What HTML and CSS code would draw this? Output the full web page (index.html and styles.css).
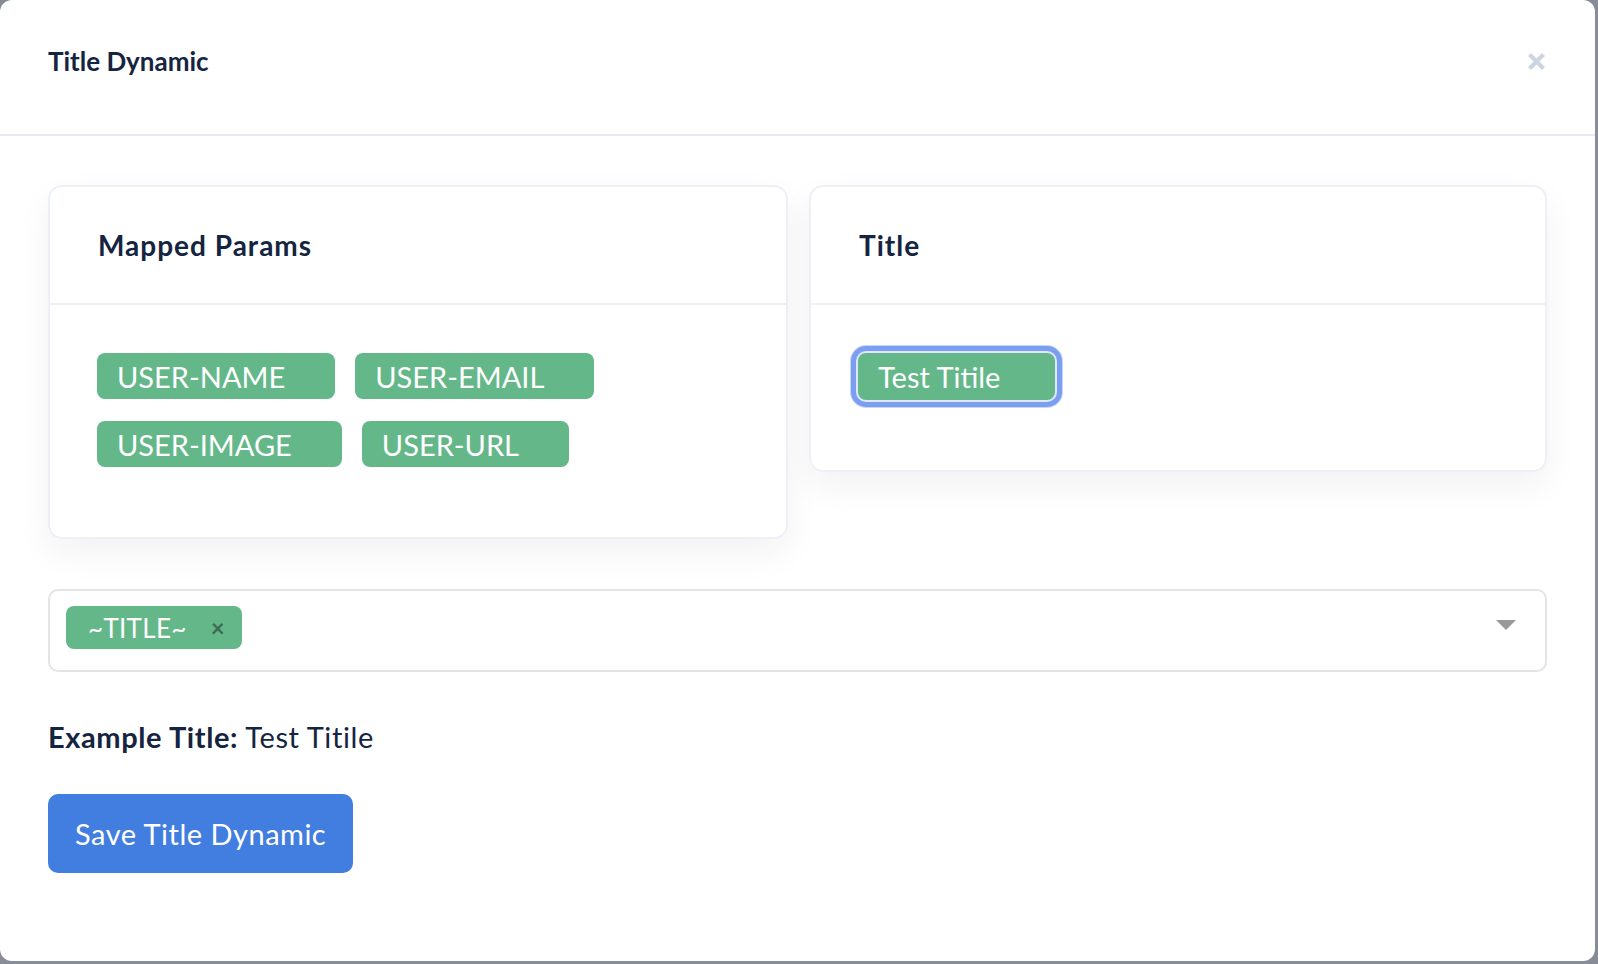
FILE: index.html
```html
<!DOCTYPE html>
<html lang="en">
    <head>
        <meta charset="UTF-8">
        <meta name="viewport" content="width=device-width, initial-scale=1.0">
        <title>Title Dynamic</title>
        <link rel="stylesheet" href="styles.css">
    </head>
    <body>
        <div class="modal">
            <div class="modal-head">
                <div class="modal-title">Title Dynamic</div>
                <button class="close" type="button">
                    <svg width="19" height="19" viewBox="0 0 19 19">
                        <path d="M2.5 2.5 L16.5 16.5 M16.5 2.5 L2.5 16.5" stroke="#ccd3e1" stroke-width="4.2" stroke-linecap="butt"/>
                    </svg>
                </button>
            </div>

            <div class="modal-body">
                <div class="cards">
                    <div class="card">
                        <div class="card-head">Mapped Params</div>
                        <div class="card-body">
                            <span class="tag">USER-NAME</span>
                            <span class="tag">USER-EMAIL</span>
                            <span class="tag">USER-IMAGE</span>
                            <span class="tag">USER-URL</span>
                        </div>
                    </div>
                    <div class="card">
                        <div class="card-head">Title</div>
                        <div class="card-body">
                            <span class="tag tag-focus">Test Titile</span>
                        </div>
                    </div>
                </div>

                <!-- 选择框 -->
                <div class="select">
                    <span class="chip">~TITLE~<span class="chip-x">×</span></span>
                    <span class="caret"></span>
                </div>

                <p class="example"><b>Example Title:</b> Test Titile</p>

                <button class="save" type="button">Save Title Dynamic</button>
            </div>
        </div>
    </body>
</html>
```

FILE: styles.css
```css
* {
    margin: 0;
    padding: 0;
    box-sizing: border-box;
}

body {
    background-color: #878c97;
    font-family: Lato, "Liberation Sans", sans-serif;
    color: #15243f;
    overflow: hidden;
}

.modal {
    width: 1595px;
    height: 961px;
    background-color: #fff;
    border-radius: 12px;
}

.modal-head {
    display: flex;
    align-items: center;
    justify-content: space-between;
    height: 136px;
    padding: 0 49px 0 48px;
    border-bottom: 2px solid #e6e9f2;
}

.modal-title {
    font-size: 26px;
    font-weight: 700;
    margin-top: -13px;
}

.close {
    border: none;
    background: none;
    display: flex;
    margin-top: -11px;
}

.modal-body {
    padding: 49px 48px;
}

.cards {
    display: grid;
    grid-template-columns: 740px 738px;
    gap: 21px;
    align-items: start;
}

.card {
    border: 2px solid #edf1f7;
    border-radius: 14px;
    box-shadow: 0 14px 34px rgba(30, 40, 70, 0.06);
}

.card-head {
    height: 118px;
    display: flex;
    align-items: center;
    padding: 0 48px;
    font-size: 28px;
    font-weight: 700;
    letter-spacing: 1px;
    border-bottom: 2px solid #edf1f7;
}

.card-body {
    padding: 48px 47px 26px;
    display: flex;
    flex-wrap: wrap;
}

.tag {
    display: inline-flex;
    align-items: center;
    height: 46px;
    padding: 0 50px 0 20px;
    margin: 0 20px 22px 0;
    background-color: #64b789;
    color: #fff;
    border-radius: 8px;
    font-size: 29px;
}

.tag-focus {
    height: 47px;
    padding-right: 55px;
    box-shadow: 0 0 0 2px #dfe7fb, 0 0 0 7px #7b9ef0, 0 0 0 8px #c8d6f8;
}

.card-body:last-child {
    padding-bottom: 48px;
}

.select {
    position: relative;
    display: flex;
    align-items: flex-start;
    height: 83px;
    margin-top: 50px;
    padding: 15px 16px 0;
    border: 2px solid #e4e4e4;
    border-radius: 10px;
}

.chip {
    display: inline-flex;
    align-items: center;
    height: 43px;
    padding: 0 17px 0 22px;
    background-color: #64b789;
    color: #fff;
    border-radius: 8px;
    font-size: 26px;
    letter-spacing: 0.3px;
}

.chip-x {
    margin-left: 24px;
    color: #3d6b50;
    font-weight: 700;
    font-size: 24px;
}

.caret {
    position: absolute;
    right: 29px;
    top: 29px;
    border-left: 10px solid transparent;
    border-right: 10px solid transparent;
    border-top: 10px solid #999;
}

.example {
    margin-top: 48px;
    font-size: 29px;
    line-height: 1.2;
    letter-spacing: 0.6px;
}

.save {
    margin-top: 39px;
    height: 79px;
    padding: 0 27px;
    border: none;
    border-radius: 10px;
    background-color: #427ee0;
    color: #fff;
    font-family: Lato, "Liberation Sans", sans-serif;
    font-size: 29px;
    letter-spacing: 0.5px;
}
```
